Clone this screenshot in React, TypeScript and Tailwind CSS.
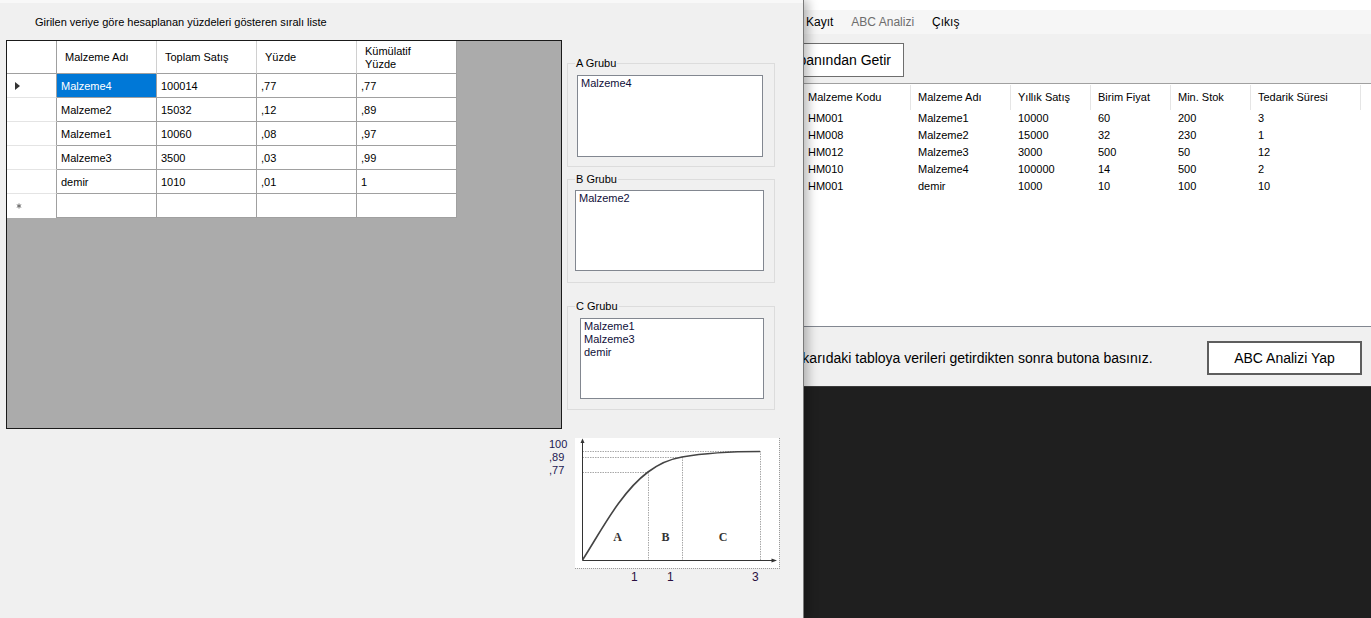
import React from "react";

const gridRows = [
  ["Malzeme4", "100014", ",77", ",77"],
  ["Malzeme2", "15032", ",12", ",89"],
  ["Malzeme1", "10060", ",08", ",97"],
  ["Malzeme3", "3500", ",03", ",99"],
  ["demir", "1010", ",01", "1"],
];

const lvRows = [
  ["HM001", "Malzeme1", "10000", "60", "200", "3"],
  ["HM008", "Malzeme2", "15000", "32", "230", "1"],
  ["HM012", "Malzeme3", "3000", "500", "50", "12"],
  ["HM010", "Malzeme4", "100000", "14", "500", "2"],
  ["HM001", "demir", "1000", "10", "100", "10"],
];

const lvCols = [
  { t: "Malzeme Kodu", w: "w-[128px] pl-[25px]" },
  { t: "Malzeme Adı", w: "w-[100px] pl-[7px]" },
  { t: "Yıllık Satış", w: "w-[80px] pl-[7px]" },
  { t: "Birim Fiyat", w: "w-[80px] pl-[7px]" },
  { t: "Min. Stok", w: "w-[80px] pl-[7px]" },
  { t: "Tedarik Süresi", w: "w-[110px] pl-[7px]" },
];

function DataGrid() {
  return (
    <div className="ml-[6px] w-[556px] h-[389px] border border-[#1a1a1a] bg-[#ababab] text-[11px] text-black">
      <div className="flex h-[33px] bg-white w-[450px]">
        <div className="w-[50px] h-full border-r border-b border-[#a0a0a0]" />
        {["Malzeme Adı", "Toplam Satış", "Yüzde"].map((h) => (
          <div key={h} className="w-[100px] h-full flex items-center pl-[8px] pt-[1px] border-r border-[#d0d0d0] border-b border-b-[#a0a0a0]">
            {h}
          </div>
        ))}
        <div className="w-[100px] h-full flex flex-col justify-center pl-[8px] pt-[1px] leading-[13px] border-r border-[#a0a0a0] border-b">
          <span>Kümülatif</span>
          <span>Yüzde</span>
        </div>
      </div>
      {gridRows.map((r, i) => (
        <div key={i} className="flex h-[24px] w-[450px] bg-white">
          <div className="w-[50px] h-full flex items-center pl-[8px] border-r border-[#a0a0a0] border-b border-b-[#e4e4e4]">
            {i === 0 && (
              <span className="w-0 h-0 border-y-[4px] border-y-transparent border-l-[5px] border-l-[#333]" />
            )}
          </div>
          {r.map((c, j) => (
            <div
              key={j}
              className={
                "w-[100px] h-full flex items-center pl-[4px] pt-[1px] border-r border-b border-[#a0a0a0] " +
                (i === 0 && j === 0 ? "bg-[#0078d7] text-white" : "")
              }
            >
              {c}
            </div>
          ))}
        </div>
      ))}
      <div className="flex h-[24px] w-[450px] bg-white">
        <div className="w-[50px] h-full flex items-center pl-[9px] border-r border-[#a0a0a0]">
          <svg width="6" height="6" viewBox="0 0 6 6">
            <path d="M3 0.5V5.5M0.8 1.7L5.2 4.3M0.8 4.3L5.2 1.7" stroke="#6a6a6a" strokeWidth="1" />
          </svg>
        </div>
        {[0, 1, 2, 3].map((j) => (
          <div key={j} className="w-[100px] h-full border-r border-b border-[#a0a0a0]" />
        ))}
      </div>
    </div>
  );
}

function Group({
  title,
  items,
  cls,
  boxCls,
}: {
  title: string;
  items: string[];
  cls: string;
  boxCls: string;
}) {
  return (
    <fieldset className={"h-[110px] border border-[#dcdcdc] " + cls}>
      <legend className="ml-[7px] px-[1px] text-[11px] leading-[13px] text-black">{title}</legend>
      <div className={"bg-white border border-[#828790] pl-[3px] pt-[1px] text-[11px] leading-[13px] text-[#10103a] " + boxCls}>
        {items.map((t) => (
          <div key={t}>{t}</div>
        ))}
      </div>
    </fieldset>
  );
}

function Chart() {
  return (
    <svg width="205" height="131" viewBox="0 0 205 131">
      <rect x="0" y="0" width="204" height="130" fill="white" />
      <line x1="0" y1="130.5" x2="205" y2="130.5" stroke="#9a9a9a" strokeDasharray="1 1" />
      <line x1="204.5" y1="0" x2="204.5" y2="131" stroke="#9a9a9a" strokeDasharray="1 1" />
      <g stroke="#a8a8a8" strokeDasharray="1.5 1" strokeWidth="1">
        <line x1="7.5" y1="13.5" x2="185.5" y2="13.5" />
        <line x1="7.5" y1="19.5" x2="107.5" y2="19.5" />
        <line x1="7.5" y1="34.5" x2="73.5" y2="34.5" />
        <line x1="73.5" y1="34" x2="73.5" y2="122" />
        <line x1="107.5" y1="19" x2="107.5" y2="122" />
        <line x1="185.5" y1="13" x2="185.5" y2="122" />
      </g>
      <line x1="7.5" y1="122.5" x2="7.5" y2="4" stroke="#333" strokeWidth="1" />
      <polygon points="7.5,0.5 5.5,5 9.5,5" fill="#333" />
      <line x1="7.5" y1="122.5" x2="198" y2="122.5" stroke="#333" strokeWidth="1" />
      <polygon points="202,122.5 196.5,120.5 196.5,124.5" fill="#333" />
      <path
        d="M7.5 122 C 25 95, 45 55, 73 34 C 85 25, 95 21, 107 19 C 130 15, 160 13.5, 185 13.5"
        stroke="#444"
        strokeWidth="1.6"
        fill="none"
      />
      <g fontFamily="'Liberation Serif', serif" fontSize="12" fontWeight="bold" fill="#333" textAnchor="middle">
        <text x="42.5" y="102.5">A</text>
        <text x="90.5" y="102.5">B</text>
        <text x="148" y="102.5">C</text>
      </g>
    </svg>
  );
}

function LeftWindow() {
  return (
    <div className="absolute left-0 top-0 z-10 w-[804px] h-[618px] bg-[#f0f0f0] border-r border-[#7a7a7a] shadow-[4px_0_10px_rgba(0,0,0,0.28)] flex flex-col">
      <div className="h-[3px] bg-[#f8f8f8]" />
      <p className="pl-[35px] pt-[12px] text-[11px] leading-[14px] text-black">
        Girilen veriye göre hesaplanan yüzdeleri gösteren sıralı liste
      </p>
      <div className="flex mt-[11px]">
        <DataGrid />
        <div className="ml-[5px] w-[208px] flex flex-col">
          <Group title="A Grubu" items={["Malzeme4"]} cls="mt-[17px]" boxCls="ml-[9px] mt-[5px] w-[186px] h-[82px]" />
          <Group title="B Grubu" items={["Malzeme2"]} cls="mt-[6px]" boxCls="ml-[7px] mt-[4px] w-[189px] h-[81px]" />
          <Group
            title="C Grubu"
            items={["Malzeme1", "Malzeme3", "demir"]}
            cls="mt-[17px]"
            boxCls="ml-[12px] mt-[5px] w-[184px] h-[81px]"
          />
        </div>
      </div>
      <div className="flex ml-[549px] mt-[9px]">
        <div className="w-[26px] flex flex-col text-[11px] leading-[13px] text-[#1c1850]">
          <span>100</span>
          <span>,89</span>
          <span>,77</span>
        </div>
        <Chart />
      </div>
      <div className="flex ml-[631px] mt-[1px] text-[12px] leading-[14px] text-[#2a1040]">
        <span className="w-[36px]">1</span>
        <span className="w-[85px]">1</span>
        <span>3</span>
      </div>
    </div>
  );
}

function RightWindow() {
  return (
    <div className="absolute left-[783px] top-0 w-[588px] h-[387px] bg-[#f0f0f0] border-b border-[#3a3a3a] flex flex-col text-black">
      <div className="h-[10px] bg-white" />
      <div className="h-[24px] bg-[#f6f6f6] flex items-center pl-[23px] gap-[18px] text-[12px]">
        <span>Kayıt</span>
        <span className="text-[#6d6d6d]">ABC Analizi</span>
        <span>Çıkış</span>
      </div>
      <div className="pt-[9px]">
        <div className="ml-[-49px] w-[170px] h-[34px] bg-white border border-[#6e6e6e] flex items-center justify-end pr-[12px] whitespace-nowrap text-[14px]">
          Veri Tabanından Getir
        </div>
      </div>
      <div className="mt-[6px] h-[244px] pt-[1px] bg-white border-t border-b border-t-[#a0a0a0] border-b-[#828790] text-[11px]">
        <div className="flex h-[25px]">
          {lvCols.map((c) => (
            <div key={c.t} className={"h-full flex items-center border-r border-[#e5e5e5] " + c.w}>
              {c.t}
            </div>
          ))}
        </div>
        {lvRows.map((r, i) => (
          <div key={i} className="flex h-[17px] items-center">
            {r.map((v, j) => (
              <div key={j} className={lvCols[j].w}>
                {v}
              </div>
            ))}
          </div>
        ))}
      </div>
      <div className="flex-1 flex items-center pt-[3px]">
        <span className="pl-[3px] text-[14px] whitespace-nowrap">
          Yukarıdaki tabloya verileri getirdikten sonra butona basınız.
        </span>
        <div className="ml-auto mr-[9px] w-[155px] h-[34px] bg-white border-2 border-[#5e5e5e] flex items-center justify-center text-[14px]">
          ABC Analizi Yap
        </div>
      </div>
    </div>
  );
}

export default function App() {
  return (
    <div className="relative w-[1371px] h-[618px] overflow-hidden bg-[#1f1f1f] font-['Liberation_Sans',Arial,sans-serif]">
      <RightWindow />
      <LeftWindow />
    </div>
  );
}
